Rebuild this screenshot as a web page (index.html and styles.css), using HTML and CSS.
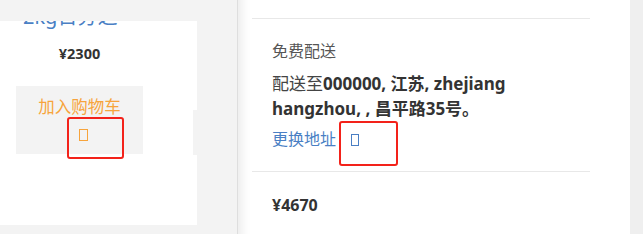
FILE: index.html
```html
<!DOCTYPE html>
<html lang="zh-CN">
<head>
<meta charset="utf-8">
<title>购物车</title>
<link rel="stylesheet" href="styles.css">
</head>
<body>
<div class="page">
  <div class="products">
    <div class="card">
      <div class="card-main">
        <div class="title">2kg日分之</div>
        <div class="price">¥2300</div>
        <div class="add-btn">
          <span class="add-text">加入购物车</span>
          <span class="icon-line"><i class="tofu tofu-orange"></i></span>
          <span class="mark mark-btn"></span>
        </div>
      </div>
      <div class="peek"></div>
    </div>
  </div>
  <div class="drawer">
    <div class="drawer-inner">
      <div class="sec sec-top"></div>
      <div class="sec sec-ship">
        <div class="ship-title">免费配送</div>
        <div class="ship-addr"><span class="addr-lead">配送至</span><b>000000, 江苏, zhejiang hangzhou, , 昌平路35号。</b></div>
        <div class="change">
          <a class="change-link">更换地址</a><i class="tofu tofu-blue"></i>
          <span class="mark mark-link"></span>
        </div>
      </div>
      <div class="sec sec-total">¥4670</div>
    </div>
  </div>
  <div class="rest"></div>
</div>
</body>
</html>
```

FILE: styles.css
```css
* { box-sizing: border-box; }
html, body { margin: 0; padding: 0; }
body {
  background: #f3f3f3;
  font-family: "Noto Sans", "Noto Sans CJK SC", sans-serif;
  color: #333;
  width: 643px;
  height: 234px;
  overflow: hidden;
}
.page {
  display: flex;
  height: 234px;
}
.products {
  width: 237px;
  padding-top: 21px;
}
.card {
  width: 197px;
  height: 204px;
  background: #fff;
  overflow: hidden;
  display: flex;
}
.card-main {
  width: 193px;
  padding-left: 16px;
}
.peek {
  width: 4px;
  height: 45px;
  margin-top: 89px;
  background: #f3f3f3;
}
.title {
  font-size: 20px;
  line-height: 20px;
  margin-top: -14px;
  padding-left: 7px;
  color: #4a7fc4;
  white-space: nowrap;
}
.price {
  margin-top: 16px;
  width: 127px;
  text-align: center;
  font-weight: 700;
  font-size: 14.5px;
  line-height: 20px;
  color: #333;
}
.add-btn {
  position: relative;
  margin-top: 23px;
  width: 127px;
  height: 68px;
  background: #f3f3f3;
  padding-top: 8px;
  text-align: center;
  color: #f7a43c;
  font-size: 16.5px;
  line-height: 26px;
}
.add-text { display: block; }
.icon-line { display: block; padding-left: 8px; height: 26px; }
.tofu {
  display: inline-block;
  width: 9px;
  height: 12px;
  border: 1px solid currentColor;
  vertical-align: middle;
}
.tofu-orange { color: #f7a43c; }
.tofu-blue { color: #4a7fc4; margin-left: 15px; width: 8px; height: 12px; vertical-align: -1px; }
.mark {
  position: absolute;
  border: 2px solid #f3221a;
  border-radius: 3px;
}
.mark-btn { left: 51px; top: 31px; width: 57px; height: 42px; }
.drawer {
  width: 393px;
  height: 234px;
  background: #fff;
  box-shadow: inset 14px 0 10px -10px #ececec;
  border-left: 1px solid #dedede;
}
.drawer-inner {
  margin-left: 14px;
  width: 338px;
}
.sec { border-bottom: 1px solid #e8e8e8; padding-left: 20px; }
.sec-top { height: 19px; }
.sec-ship { padding-top: 20px; padding-bottom: 20px; }
.ship-title {
  font-size: 16px;
  line-height: 24px;
  color: #555;
}
.ship-addr {
  margin-top: 8px;
  font-size: 17px;
  line-height: 25px;
  color: #444;
  width: 270px;
}
.ship-addr b { color: #333; }
.change {
  position: relative;
  margin-top: 6px;
  font-size: 16px;
  line-height: 24px;
  color: #4a7fc4;
}
.mark-link { left: 67px; top: -6px; width: 59px; height: 45px; }
.sec-total {
  border-bottom: none;
  padding-top: 21px;
  font-size: 16px;
  font-weight: 700;
  line-height: 24px;
  color: #333;
}
.rest {
  flex: 1;
  background: #efefef;
}
```
